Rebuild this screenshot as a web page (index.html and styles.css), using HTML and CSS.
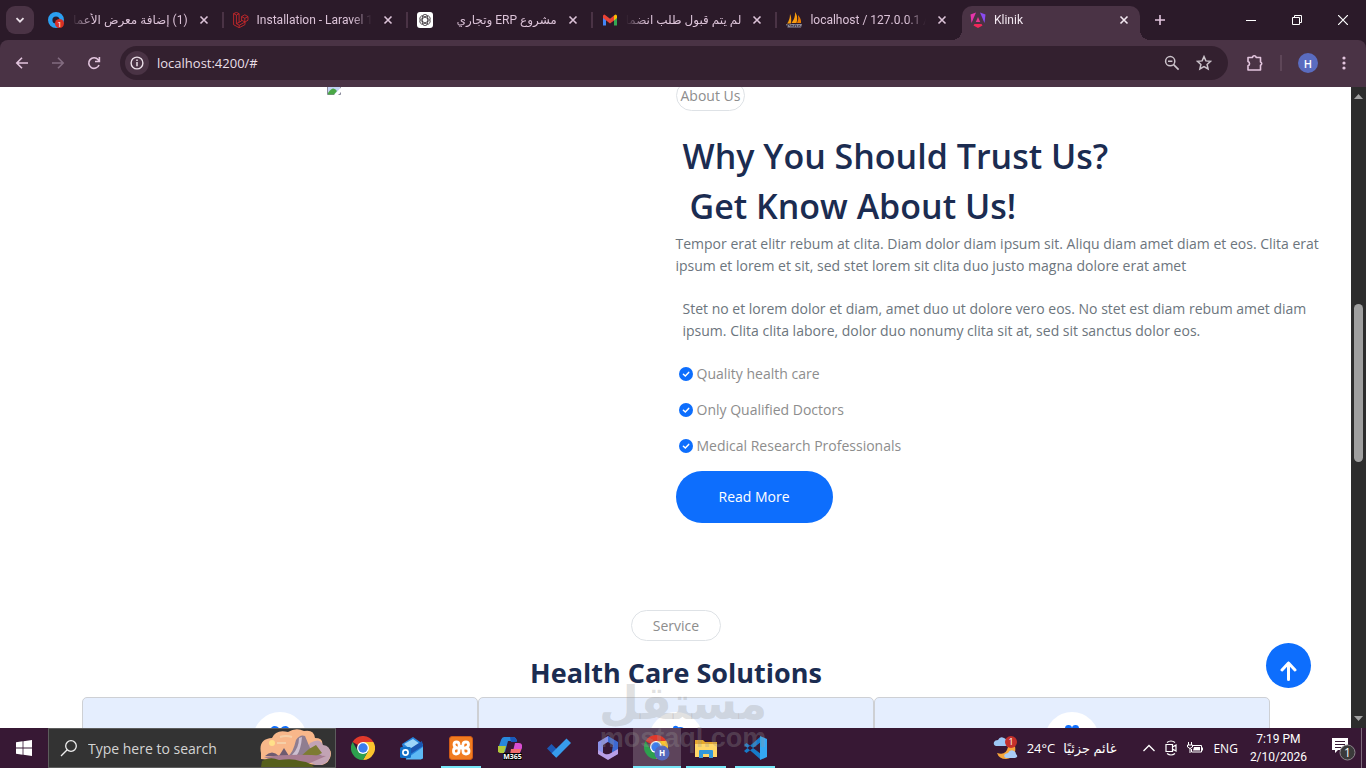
FILE: index.html
```
<!DOCTYPE html>
<html lang="en">

<head>
    <meta charset="UTF-8" />
    <meta name="viewport" content="width=device-width,initial-scale=1.0" />
    <title>Klinik</title>
    <link rel="stylesheet" href="styles.css">
</head>

<body>
    <!-- shared icons -->
    <svg class="defs" width="0" height="0">
        <symbol id="i-close" viewBox="0 0 10 10"><path d="M1.5 1.5l7 7M8.5 1.5l-7 7" fill="none" stroke="currentColor" stroke-width="1.6" /></symbol>
        <symbol id="i-check" viewBox="0 0 14 14"><circle cx="7" cy="7" r="7" fill="#0d6efd" /><path d="M4.4 7.2l1.9 1.8 3.4-3.6" fill="none" stroke="#fff" stroke-width="1.5" stroke-linecap="round" /></symbol>
        <symbol id="i-chrome" viewBox="0 0 24 24">
            <path d="M12 12L1.6 6A12 12 0 0 1 22.4 6z" fill="#e0392b" />
            <path d="M12 12L12 6H22.4A12 12 0 0 1 12 24L17.2 15z" fill="#fbc42d" />
            <path d="M12 12L6.8 15 1.6 6A12 12 0 0 0 12 24L17.2 15z" fill="#2da04e" />
            <circle cx="12" cy="12" r="6" fill="#fff" />
            <circle cx="12" cy="12" r="4.7" fill="#3b7ded" />
        </symbol>
    </svg>

    <header class="tabstrip">
        <button class="tab-search" aria-label="Search tabs">
            <svg width="10" height="10" viewBox="0 0 10 10"><path d="M1.5 3.2L5 6.7l3.5-3.5" fill="none" stroke="#eadfe8" stroke-width="1.8" /></svg>
        </button>
        <div class="tabs">
            <div class="tab">
                <svg class="favicon" viewBox="0 0 16 16"><circle cx="8" cy="8" r="5.8" fill="none" stroke="#2b9ff0" stroke-width="4.4" /><circle cx="11.5" cy="11.5" r="4.5" fill="#d93025" /><text x="11.5" y="14.5" font-size="8" text-anchor="middle" fill="#fff">1</text></svg>
                <span class="tab-title rtl" dir="rtl">(1) إضافة معرض الأعمال</span>
                <button class="tab-close" aria-label="Close tab"><svg width="10" height="10"><use href="#i-close" /></svg></button>
            </div>
            <div class="tab">
                <svg class="favicon" viewBox="0 0 16 16"><path d="M.6 1.6l2.8-1.2 2.7 1.3v8.6l2.5-1.4V4.6l3.2-1.8 3.2 1.8v3.6l-3 1.8v2.6l-5.8 3.1-5.6-3zM.6 1.6l2.8 1.5 2.7-1.4M3.4 3.1v8.6l2.9 1.5 5.7-3.2M3.4 11.7l2.7-1.4M6.2 13.2v2.4M8.6 4.6l3.2 1.7L15 4.6M11.8 6.3V10M8.6 8.2L12 10" fill="none" stroke="#d8292b" stroke-width=".8" /></svg>
                <span class="tab-title">Installation - Laravel 12.x</span>
                <button class="tab-close" aria-label="Close tab"><svg width="10" height="10"><use href="#i-close" /></svg></button>
            </div>
            <div class="tab">
                <svg class="favicon" viewBox="0 0 16 16"><rect width="16" height="16" rx="3" fill="#fff" /><g fill="none" stroke="#3a3238" stroke-width=".8"><rect x="5.4" y="2.4" width="5.2" height="11.2" rx="2.6" /><rect x="5.4" y="2.4" width="5.2" height="11.2" rx="2.6" transform="rotate(60 8 8)" /><rect x="5.4" y="2.4" width="5.2" height="11.2" rx="2.6" transform="rotate(120 8 8)" /></g></svg>
                <span class="tab-title rtl" dir="rtl">مشروع ERP وتجاري</span>
                <button class="tab-close" aria-label="Close tab"><svg width="10" height="10"><use href="#i-close" /></svg></button>
            </div>
            <div class="tab">
                <svg class="favicon" viewBox="0 0 16 16"><path d="M1 4v9.5h3V7z" fill="#4285f4" /><path d="M12 7v6.5h3V4z" fill="#34a853" /><path d="M12 3.5l1.5-1q1.5 0 1.5 1.500v2l-3 2.500z" fill="#fbbc04" /><path d="M1 4q0-1.500 1.500-1.500L8 6.800l4-3.300v5L8 11.400 1 6z" fill="#ea4335" /></svg>
                <span class="tab-title rtl" dir="rtl">لم يتم قبول طلب انضمامك</span>
                <button class="tab-close" aria-label="Close tab"><svg width="10" height="10"><use href="#i-close" /></svg></button>
            </div>
            <div class="tab">
                <svg class="favicon" viewBox="0 0 16 16"><path d="M1 11.500Q4 8 4 2q2 4 .8 9.500zM5.500 11Q9.500 6 9 0q3.500 5 1.500 11z" fill="#f89c0e" /><path d="M11 11q2-4 1-8 3.500 4 3 8z" fill="#e97b00" /><path d="M0 12h16l-1 3.500H1.500z" fill="#8b8998" /><path d="M1.500 15v-2.500h2V14M5 12.500V15m0-1.500h2V15M8.500 15v-2h2v2M12 15l1-2 1.500 2" fill="none" stroke="#3a3548" stroke-width=".8" /></svg>
                <span class="tab-title">localhost / 127.0.0.1 / klinik</span>
                <button class="tab-close" aria-label="Close tab"><svg width="10" height="10"><use href="#i-close" /></svg></button>
            </div>
            <div class="tab active">
                <svg class="favicon" viewBox="0 0 16 16"><path d="M6 .5L.5 2.500 1.500 11z" fill="#e535ab" /><path d="M10 .5l5.500 2L14.500 11z" fill="#8a4bf0" /><path d="M8 5l2.200 5H5.800z" fill="#e8368f" /><path d="M4.500 12h7l1 1.500L8 16l-4.500-2.500z" fill="#f0285a" /></svg>
                <span class="tab-title">Klinik</span>
                <button class="tab-close" aria-label="Close tab"><svg width="10" height="10"><use href="#i-close" /></svg></button>
            </div>
        </div>
        <button class="new-tab" aria-label="New tab">
            <svg width="12" height="12" viewBox="0 0 12 12"><path d="M6 1v10M1 6h10" stroke="#e3c5de" stroke-width="1.6" /></svg>
        </button>
        <div class="window-buttons">
            <button aria-label="Minimize"><svg width="10" height="10"><path d="M0 5.500h10" stroke="#fff" /></svg></button>
            <button aria-label="Restore"><svg width="10" height="10" viewBox="0 0 10 10"><path d="M.5 2.500h7v7h-7zM2.500 2.500v-2h7v7h-2" fill="none" stroke="#fff" /></svg></button>
            <button aria-label="Close"><svg width="10" height="10" viewBox="0 0 10 10"><path d="M0 0l10 10M10 0L0 10" stroke="#fff" stroke-width="1.200" /></svg></button>
        </div>
    </header>

    <div class="toolbar">
        <div class="nav-buttons">
            <button aria-label="Back"><svg width="14" height="14" viewBox="0 0 14 14"><path d="M13 7H2M7 1.800L1.800 7 7 12.200" fill="none" stroke="#e3c5de" stroke-width="1.600" /></svg></button>
            <button aria-label="Forward"><svg width="14" height="14" viewBox="0 0 14 14"><path d="M1 7h11M7 1.800L12.200 7 7 12.200" fill="none" stroke="#836c80" stroke-width="1.600" /></svg></button>
            <button aria-label="Reload"><svg width="14" height="14" viewBox="0 0 14 14"><path d="M12 9a5.300 5.300 0 1 1-.8-5.200l1 1.200M12.400 1v4.500H8" fill="none" stroke="#e3c5de" stroke-width="1.600" /></svg></button>
        </div>
        <div class="address">
            <button class="site-info" aria-label="Site information">
                <svg width="14" height="14" viewBox="0 0 14 14"><circle cx="7" cy="7" r="5.900" fill="none" stroke="#eadfe8" stroke-width="1.400" /><path d="M7 6v4.200M7 3.600v1.500" stroke="#eadfe8" stroke-width="1.500" /></svg>
            </button>
            <input class="url" type="text" value="localhost:4200/#" aria-label="Address">
            <button aria-label="Zoom"><svg width="16" height="16" viewBox="0 0 16 16"><circle cx="6.200" cy="6.200" r="4.600" fill="none" stroke="#ccc3cb" stroke-width="1.500" /><path d="M9.600 9.600l5 5M4 6.200h4.400" stroke="#ccc3cb" stroke-width="1.600" /></svg></button>
            <button aria-label="Bookmark"><svg width="16" height="16" viewBox="0 0 16 16"><path d="M8 1.600l1.900 4.300 4.700.4-3.500 3.100 1 4.600L8 11.600 3.900 14l1-4.600-3.500-3.100 4.700-.4z" fill="none" stroke="#ccc3cb" stroke-width="1.500" /></svg></button>
        </div>
        <button class="tool" aria-label="Extensions"><svg width="18" height="18" viewBox="0 0 18 18"><path d="M2 3.500h4.500a1.800 1.800 0 0 1 3.600 0h4.400v4.400a1.800 1.800 0 0 1 0 3.400V16H2v-4.200a2.200 2.200 0 0 0 0-4.200z" fill="none" stroke="#e3c5de" stroke-width="1.600" stroke-linejoin="round" /></svg></button>
        <span class="divider"></span>
        <button class="avatar">H</button>
        <button class="tool menu" aria-label="Menu"><svg width="4" height="14" viewBox="0 0 4 14" fill="#e3c5de"><circle cx="2" cy="2" r="1.600" /><circle cx="2" cy="7" r="1.600" /><circle cx="2" cy="12" r="1.600" /></svg></button>
    </div>

    <div class="viewport">
        <main class="page">
            <section class="about">
                <div class="about-photo">
                    <svg width="14" height="15" viewBox="0 0 14 15"><path d="M.5.5h13v14H.5z" fill="#c3d3f5" stroke="#8b8b9b" /><path d="M1 13q5-8 9-2l-3 3.500H1z" fill="#4aa845" /><path d="M14 7.500L7 15h4l3-3z" fill="#fff" /></svg>
                </div>
                <div class="about-text">
                    <span class="pill small">About Us</span>
                    <h1><span>Why You Should Trust Us?</span><span class="second">Get Know About Us!</span></h1>
                    <p>Tempor erat elitr rebum at clita. Diam dolor diam ipsum sit. Aliqu diam amet diam et eos. Clita erat<br>ipsum et lorem et sit, sed stet lorem sit clita duo justo magna dolore erat amet</p>
                    <p class="indent">Stet no et lorem dolor et diam, amet duo ut dolore vero eos. No stet est diam rebum amet diam<br>ipsum. Clita clita labore, dolor duo nonumy clita sit at, sed sit sanctus dolor eos.</p>
                    <ul class="checks">
                        <li><svg width="14" height="14"><use href="#i-check" /></svg>Quality health care</li>
                        <li><svg width="14" height="14"><use href="#i-check" /></svg>Only Qualified Doctors</li>
                        <li><svg width="14" height="14"><use href="#i-check" /></svg>Medical Research Professionals</li>
                    </ul>
                    <a class="read-more" href="#">Read More</a>
                </div>
            </section>

            <section class="services">
                <span class="pill">Service</span>
                <h2>Health Care Solutions</h2>
                <div class="cards">
                    <div class="card"><span class="card-icon"><svg width="28" height="28" viewBox="0 0 24 24" fill="#0d6efd"><path d="M12 22L3 13Q0 5 6 1q4-1 6 3 2-4 6-3 6 4 3 12z" /></svg></span></div>
                    <div class="card"><span class="card-icon"><svg width="28" height="28" viewBox="0 0 24 24" fill="#0d6efd"><path d="M10 1q3-1 4 1 3-1 5 1l-2 18H6L8 6z" /></svg></span></div>
                    <div class="card"><span class="card-icon"><svg width="28" height="28" viewBox="0 0 24 24" fill="#0d6efd"><circle cx="9" cy="3" r="3" /><circle cx="15" cy="3" r="3" /><path d="M5 8h14l-2 14H7z" /></svg></span></div>
                </div>
            </section>
        </main>
        <a class="back-top" href="#" aria-label="Back to top">
            <svg width="17" height="20" viewBox="0 0 17 20"><path d="M8.500 18.500V2M2 9l6.500-7L15 9" fill="none" stroke="#fff" stroke-width="3" stroke-linecap="round" stroke-linejoin="round" /></svg>
        </a>
        <div class="scrollbar">
            <svg width="9" height="5"><path d="M0 5L4.500 0 9 5z" fill="#a0a0a0" /></svg>
            <div class="track"><div class="thumb"></div></div>
            <svg width="9" height="5"><path d="M0 0l4.500 5L9 0z" fill="#a0a0a0" /></svg>
        </div>
    </div>

    <footer class="taskbar">
        <button class="start" aria-label="Start"><svg width="16" height="16" viewBox="0 0 16 16" fill="#fff"><path d="M0 2.200L6.600 1.300v6.300H0zM7.400 1.200L16 0v7.600H7.400zM0 8.400h6.600v6.300L0 13.800zM7.400 8.400H16V16l-8.600-1.200z" /></svg></button>
        <label class="search">
            <svg width="18" height="18" viewBox="0 0 18 18"><circle cx="11" cy="7" r="5.300" fill="none" stroke="#eee" stroke-width="1.300" /><path d="M7.200 10.800L1 17" stroke="#eee" stroke-width="1.300" /></svg>
            <input type="text" placeholder="Type here to search" aria-label="Search">
            <svg class="scenery" width="72" height="38" viewBox="0 0 72 38">
                <path d="M1 24Q-2 10 12 9 16 0 28 3q8-5 16-1 10-2 11 7 9 0 7 8 12 2 8 12-3 8-13 7l-56-6z" fill="#f8b78a" />
                <path d="M50 14q10-6 13 2 9 1 7 12-3 9-14 8l-14-6z" fill="#c2a3b4" />
                <circle cx="12" cy="14" r="3" fill="#ffe089" />
                <path d="M20 8q6-2 12 0M17 14h9" fill="none" stroke="#f5cfa8" stroke-width="2" />
                <path d="M28 27Q33 24 36 11q4-6 9-4l5 12 12 8z" fill="#8f7d90" />
                <path d="M32 26q7-7 7-17l3-1q-1 12-5 18z" fill="#cdbfd0" />
                <path d="M5 27q7-7 14 0zM19 27l5-8 5 8z" fill="#6e5b70" />
                <path d="M40 28l9-8 7-4 6 8-10 5z" fill="#7d7b32" />
                <path d="M4 28q28-4 62-1l-16 7H18z" fill="#a77c91" />
                <path d="M1 38l1-6q8-5 17-1 14-2 21 1 10 1 14 6z" fill="#565f1c" />
            </svg>
        </label>
        <nav class="apps">
            <button class="app" aria-label="Chrome"><svg width="24" height="24"><use href="#i-chrome" /></svg></button>
            <button class="app" aria-label="Outlook"><svg width="24" height="24" viewBox="0 0 24 24"><path d="M2 8L13 1l10 7v14q0 1-1 1H6z" fill="#2784dc" /><path d="M4 8l9-5 7 5-8 7z" fill="#9ed5fa" /><path d="M6 23l17-12v11l-2 1.500H6z" fill="#5db9f4" /><path d="M8 14L22 5l1 5-14 9z" fill="#1b56b1" /><rect y="11" width="11" height="11" rx="1.500" fill="#126fc6" /><circle cx="5.500" cy="16.500" r="2.600" fill="none" stroke="#fff" stroke-width="1.700" /></svg></button>
            <button class="app open" aria-label="XAMPP"><svg width="24" height="24" viewBox="0 0 24 24"><rect x=".5" y=".5" width="23" height="23" rx="2.500" fill="#f17c20" stroke="#ce5b18" /><path d="M9 12H7q-2.500 0-2.500 3t2.500 3q3 0 3-3v-1.500q0-1.500 2-1.500t2 1.500V15q0 3 3 3t3-3-3-3h-2M8.500 12Q5 11 5 8.500 5 6 7.500 6 10 6 10 8.500q0 2 2 2t2-2Q14 6 17 6q2.500 0 2.500 2.500T16 12" fill="none" stroke="#fff" stroke-width="2.800" stroke-linejoin="round" stroke-linecap="round" /></svg></button>
            <button class="app" aria-label="M365 Copilot"><svg width="24" height="24" viewBox="0 0 24 24"><path d="M6 1h9q3 0 4 4H10L7 16H2Q-1 16 1 10L3 4q1-3 3-3z" fill="#2888dc" /><path d="M0 10h8l-2 7H2q-3 0-2-7z" fill="#b2c83b" /><path d="M12 1h3q3 0 4 5h-6z" fill="#1958bb" /><path d="M17 7h4q4 0 3 5l-3 7h-7z" fill="#d84ed2" /><path d="M13 13h10l-2 6h-9z" fill="#f26c6f" /><rect x="5" y="17" width="19" height="7" fill="#050505" /><text x="14.500" y="23" font-size="7" font-weight="700" text-anchor="middle" fill="#fff">M365</text></svg></button>
            <button class="app" aria-label="To Do"><svg width="24" height="24" viewBox="0 0 24 24"><path d="M0 12.500L4.500 8l9 9L9 21.500z" fill="#1c58b5" /><path d="M4.700 17.200L19.500 2.500 24 7 9.300 21.800z" fill="#379cec" /></svg></button>
            <button class="app" aria-label="Microsoft 365"><svg width="24" height="24" viewBox="0 0 24 24"><path d="M12 0L2 6v11l5 3V9l8-5z" fill="#8a91e8" /><path d="M12 0l10 6v12l-6 3v-6l1-6-5-3z" fill="#3d6ad2" /><path d="M2 14l7 4q3 1 6-1l7-4v5l-10 6-10-6z" fill="#b9a0e7" /></svg></button>
            <button class="app open current" aria-label="Chrome, H"><svg width="26" height="26" viewBox="0 0 26 26"><use href="#i-chrome" width="24" height="24" /><circle cx="18" cy="18" r="7.500" fill="#5468bd" /><text x="18" y="21" font-size="8" font-weight="700" text-anchor="middle" fill="#fff">H</text></svg></button>
            <button class="app open" aria-label="File Explorer"><svg width="24" height="24" viewBox="0 0 24 24"><path d="M1 4h8l2 2h12v15H1z" fill="#e5a82d" /><path d="M1 8h22v13H1z" fill="#ffd767" /><path d="M5 22v-7q0-1 1-1h12q1 0 1 1v7h-4v-4H9v4z" fill="#3298db" /></svg></button>
            <button class="app open" aria-label="Visual Studio Code"><svg width="24" height="24" viewBox="0 0 24 24"><path d="M17 1L1 15l2.500 2L18 6zM17 23L1 9l2.500-2L18 18z" fill="#167bc9" /><path d="M17 0l7 3v18l-7 3z" fill="#34a7f2" /></svg></button>
        </nav>
        <div class="tray">
            <button class="weather">
                <svg width="26" height="24" viewBox="0 0 26 24"><path d="M22 10q2 12-9 13-7 0-9-6 9 3 11-6z" fill="#f7a63b" /><path d="M3 10Q0 9 1 6q1-2 4-2 2-4 6-2 3 1 3 4 2 4-2 4z" fill="#9cc7f5" /><path d="M13 22q-3-1-1-4l3-1q2-4 6-2 2 1 2 3 3 3-1 4z" fill="#a9ccf7" /><circle cx="18" cy="6" r="6" fill="#c4302b" /><text x="18" y="9" font-size="9" text-anchor="middle" fill="#fff">1</text></svg>
                <span>24°C</span><span class="arabic" dir="rtl">غائم جزئيًا</span>
            </button>
            <button aria-label="Hidden icons"><svg width="12" height="12" viewBox="0 0 12 12"><path d="M.5 9L6 3.500 11.500 9" fill="none" stroke="#fff" stroke-width="1.300" /></svg></button>
            <button aria-label="Meet now"><svg width="12" height="16" viewBox="0 0 12 16"><path d="M2 2.500q4-3 8 0M2 13.500q4 3 8 0M1 4.500h6.500v7H1zM7.500 7l3.500-2v6L7.500 9" fill="none" stroke="#fff" stroke-width="1.200" /></svg></button>
            <button aria-label="Battery"><svg width="16" height="12" viewBox="0 0 16 12"><path d="M5 3.500h9.500v6.500h-10V7" fill="none" stroke="#fff" /><path d="M7 5h6v3.500H6zM15 5.500h1v3h-1z" fill="#fff" /><path d="M1.500 0v3M4.500 0v3M.5 3h5v2L3 6.500.5 5zM3 6v5" fill="none" stroke="#fff" /></svg></button>
            <button>ENG</button>
            <button class="clock"><span>7:19 PM</span><span>2/10/2026</span></button>
            <button class="notices" aria-label="Notifications"><svg width="26" height="26" viewBox="0 0 26 26"><path d="M1 3h16v12H7l-3 3v-3H1z" fill="#fff" /><path d="M4 6.500h10M4 9.500h10M4 12.500h6" stroke="#371834" /><circle cx="16.500" cy="17.500" r="7.500" fill="#3a3a3a" stroke="#8d858c" /><text x="16.500" y="22" font-size="12" text-anchor="middle" fill="#fff">1</text></svg></button>
            <span class="show-desktop"></span>
        </div>
    </footer>

    <div class="watermark"><span class="wm-ar" dir="rtl">مستقل</span><span class="wm-en">mostaql.com</span></div>
</body>

</html>
```
FILE: styles.css
```
* {
    box-sizing: border-box;
}

body {
    margin: 0;
    height: 100vh;
    display: flex;
    flex-direction: column;
    overflow: hidden;
    font-family: "Open Sans", "Noto Sans", "DejaVu Sans", sans-serif;
    font-size: 12px;
    background: #2b1a29;
    color: #fff;
}

button {
    display: flex;
    align-items: center;
    justify-content: center;
    flex: none;
    padding: 0;
    border: none;
    background: transparent;
    color: inherit;
    font: inherit;
}

input {
    min-width: 0;
    border: none;
    outline: none;
    background: transparent;
    color: inherit;
    font: inherit;
}

svg {
    display: block;
    flex: none;
}

.defs {
    position: absolute;
}

/* tab strip */
.tabstrip {
    flex: none;
    height: 40px;
    display: flex;
    align-items: center;
    background: #2b1a29;
}

.tab-search {
    width: 28px;
    height: 28px;
    margin: 0 5px 0 6px;
    border-radius: 9px;
    background: #4a3345;
}

.tabs {
    flex: 1;
    align-self: stretch;
    display: flex;
    padding-top: 6px;
}

.tab {
    position: relative;
    flex: 1;
    min-width: 0;
    display: flex;
    align-items: center;
    gap: 8px;
    padding: 0 12px 6px 9px;
    font-family: Roboto, "Open Sans", "DejaVu Sans", sans-serif;
    color: #dcc3d8;
}

.tab:not(.active)::after {
    content: "";
    position: absolute;
    right: 0;
    top: 6px;
    width: 2px;
    height: 16px;
    background: #4a3345;
}

.tab:nth-child(5)::after {
    display: none;
}

.tab.active {
    flex: 0 1 178px;
    padding: 0 8px 6px;
    border-radius: 10px 10px 0 0;
    background: #4a3345;
    color: #f3e8f1;
}

.tab.active::before,
.tab.active::after {
    content: "";
    position: absolute;
    bottom: 0;
    left: -10px;
    width: 10px;
    height: 10px;
    background: radial-gradient(circle at 0 0, #2b1a29 10px, #4a3345 10px);
}

.tab.active::after {
    left: 100%;
    background: radial-gradient(circle at 100% 0, #2b1a29 10px, #4a3345 10px);
}

.favicon {
    width: 16px;
    height: 16px;
}

.tab-title {
    flex: 1;
    min-width: 0;
    overflow: hidden;
    white-space: nowrap;
    mask-image: linear-gradient(to left, transparent, #000 20px);
}

.tab-title.rtl {
    mask-image: linear-gradient(to right, transparent, #000 20px);
}

.tab-close {
    width: 16px;
    height: 16px;
}

.new-tab {
    width: 28px;
    height: 28px;
    margin: 0 54px 0 6px;
}

.window-buttons {
    display: flex;
}

.window-buttons button {
    width: 46px;
    height: 40px;
}

/* address row */
.toolbar {
    flex: none;
    height: 47px;
    display: flex;
    align-items: center;
    padding: 0 10px 1px 4px;
    border-radius: 8px 8px 0 0;
    background: #4a3345;
}

.nav-buttons {
    display: flex;
}

.nav-buttons button {
    width: 36px;
    height: 34px;
}

.address {
    flex: 1;
    height: 34px;
    display: flex;
    align-items: center;
    gap: 16px;
    margin: 0 16px 0 8px;
    padding: 0 16px 0 5px;
    border-radius: 17px;
    background: #33202f;
}

.site-info {
    width: 24px;
    height: 24px;
    border-radius: 12px;
    background: #4a3345;
}

.url {
    flex: 1;
    margin-left: -8px;
    padding: 0;
    font-size: 13px;
    color: #e9dfe7;
}

.tool {
    width: 22px;
    height: 28px;
}

.divider {
    width: 2px;
    height: 16px;
    margin: 0 16px 0 14px;
    background: #5e4658;
}

.avatar {
    width: 20px;
    height: 20px;
    border-radius: 10px;
    background: #5a6cc0;
    font-size: 11px;
    font-weight: 600;
}

.menu {
    width: 24px;
    margin-left: 14px;
}

/* web page */
.viewport {
    position: relative;
    flex: 1;
    min-height: 0;
    display: flex;
    overflow: hidden;
    background: #fff;
}

.page {
    flex: 1;
    min-width: 0;
    font-size: 14px;
    line-height: 22px;
    color: #6c757d;
}

/* page is scrolled a little into this section */
.about {
    display: grid;
    grid-template-columns: 1fr 1fr;
    margin-top: -7px;
}

.about-photo {
    display: flex;
    justify-content: center;
    padding-right: 8px;
}

.pill {
    display: inline-block;
    padding: 4px 21px 3px;
    border: 1px solid #dee2e6;
    border-radius: 16px;
    color: #8d8d8d;
}

.pill.small {
    padding: 4px 4px 3px;
}

h1 {
    margin: 20px 0 2px 7px;
    font-size: 34px;
    font-weight: 600;
    line-height: 50px;
    color: #1b2c51;
}

h1 span {
    display: block;
}

h1 .second {
    padding-left: 7px;
}

p {
    margin: 0 0 21px;
}

.indent {
    margin-left: 7px;
}

.checks {
    margin: 0 0 14px;
    padding: 0 0 0 3px;
    list-style: none;
    color: #8d8d8d;
}

.checks li {
    display: flex;
    align-items: center;
    gap: 4px;
}

.checks li + li {
    margin-top: 14px;
}

.read-more {
    display: inline-block;
    padding: 15px 43px;
    border-radius: 26px;
    background: #0d6efd;
    color: #fff;
    text-decoration: none;
}

.services {
    display: flex;
    flex-direction: column;
    align-items: center;
    padding: 87px 81px 0 82px;
}

h2 {
    margin: 14px 0 6px;
    font-size: 27px;
    font-weight: 700;
    line-height: 36px;
    color: #1b2c51;
}

.cards {
    align-self: stretch;
    display: grid;
    grid-template-columns: repeat(3, 1fr);
}

.card {
    display: flex;
    justify-content: center;
    height: 240px;
    padding-top: 14px;
    border: 1px solid #ced0d4;
    border-radius: 5px;
    background: #e5eefe;
}

.card-icon {
    display: flex;
    align-items: center;
    justify-content: center;
    width: 54px;
    height: 54px;
    border-radius: 50%;
    background: #fff;
}

.back-top {
    position: absolute;
    right: 55px;
    bottom: 40px;
    width: 45px;
    height: 45px;
    display: flex;
    justify-content: center;
    padding-top: 18px;
    border-radius: 50%;
    background: #0d6efd;
}

.scrollbar {
    width: 15px;
    display: flex;
    flex-direction: column;
    align-items: center;
    padding: 7px 0;
    background: #2c2c2c;
}

.track {
    flex: 1;
    align-self: stretch;
    display: grid;
    grid-template-rows: 33fr 26fr 41fr;
    margin: 4px 3px;
}

.thumb {
    grid-row: 2;
    border-radius: 5px;
    background: #9f9f9f;
}

/* taskbar */
.taskbar {
    flex: none;
    height: 40px;
    display: flex;
    background: #371834;
}

.start {
    width: 48px;
}

.search {
    width: 288px;
    display: flex;
    align-items: center;
    gap: 10px;
    padding: 0 3px 0 11px;
    border: 1px solid #5c5c5c;
    background: #333;
}

.search input {
    flex: 1;
    padding: 0;
    font-size: 14px;
}

.search input::placeholder {
    color: #d4d4d4;
    opacity: 1;
}

.apps {
    display: flex;
    gap: 1px;
    margin-left: 3px;
}

.app {
    position: relative;
    width: 48px;
}

.app.open::after {
    content: "";
    position: absolute;
    left: 4px;
    right: 4px;
    bottom: 0;
    height: 2px;
    background: #76e6f7;
}

.app.current {
    background: #5d445b;
}

.app.current::after {
    left: 0;
    right: 0;
}

.tray {
    display: flex;
    gap: 10px;
    margin-left: auto;
    padding-right: 4px;
}

.weather {
    gap: 8px;
    margin-right: 17px;
    font-size: 13px;
}

.clock {
    flex-direction: column;
    margin-left: 2px;
    font-family: Roboto, "Open Sans", sans-serif;
    line-height: 18px;
}

.notices {
    margin-left: 14px;
}

.show-desktop {
    width: 1px;
    margin-left: -6px;
    background: #7d6a7b;
}

.watermark {
    position: absolute;
    left: 50%;
    bottom: 18px;
    display: flex;
    flex-direction: column;
    align-items: center;
    transform: translateX(-50%);
    color: rgba(150, 150, 150, 0.3);
    pointer-events: none;
}

.wm-ar {
    font-family: "DejaVu Sans", sans-serif;
    font-size: 46px;
    font-weight: 700;
    line-height: 46px;
}

.wm-en {
    font-family: "Liberation Sans", sans-serif;
    font-size: 27px;
    font-weight: 700;
    line-height: 24px;
}
```
